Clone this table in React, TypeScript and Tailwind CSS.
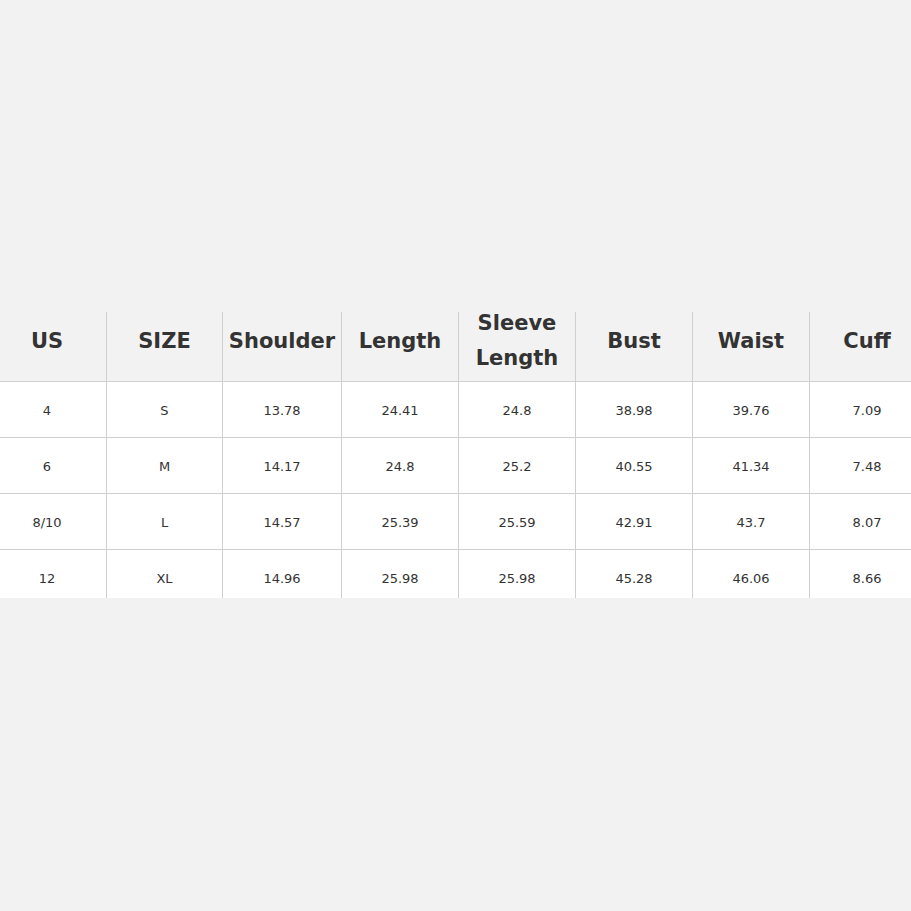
const headers = ['US', 'SIZE', 'Shoulder', 'Length', 'Sleeve Length', 'Bust', 'Waist', 'Cuff'];

const rows = [
  ['4', 'S', '13.78', '24.41', '24.8', '38.98', '39.76', '7.09'],
  ['6', 'M', '14.17', '24.8', '25.2', '40.55', '41.34', '7.48'],
  ['8/10', 'L', '14.57', '25.39', '25.59', '42.91', '43.7', '8.07'],
  ['12', 'XL', '14.96', '25.98', '25.98', '45.28', '46.06', '8.66'],
];

export default function App() {
  return (
    <div className="h-[911px] w-[911px] overflow-hidden bg-[#f2f2f2] pt-[312px] font-['DejaVu_Sans',sans-serif] text-[#333]">
      <div className="h-[286px] overflow-hidden">
        <div className="-ml-[12px] w-[936px]">
          {/* Header */}
          <div className="grid h-[70px] grid-cols-[118px_116px_119px_117px_117px_117px_117px_115px] grid-rows-[69px] border-b border-[#cfcfcf]">
            {headers.map((h, i) => (
              <div
                key={h}
                className={`flex min-h-0 items-center justify-center px-1 pb-[11px] text-center text-[21px] font-bold leading-[35px] ${
                  i > 0 ? 'border-l border-[#cfcfcf]' : ''
                }`}
              >
                {h === 'Sleeve Length' ? (
                  <span>
                    Sleeve
                    <br />
                    Length
                  </span>
                ) : (
                  h
                )}
              </div>
            ))}
          </div>

          {/* Rows */}
          {rows.map((r, ri) => (
            <div
              key={ri}
              className="grid h-[56px] grid-cols-[118px_116px_119px_117px_117px_117px_117px_115px] border-b border-[#cfcfcf] bg-white"
            >
              {r.map((c, ci) => (
                <div
                  key={ci}
                  className={`flex items-center justify-center pt-[2px] text-[13px] ${
                    ci > 0 ? 'border-l border-[#cfcfcf]' : ''
                  }`}
                >
                  {c}
                </div>
              ))}
            </div>
          ))}
        </div>
      </div>
    </div>
  );
}
